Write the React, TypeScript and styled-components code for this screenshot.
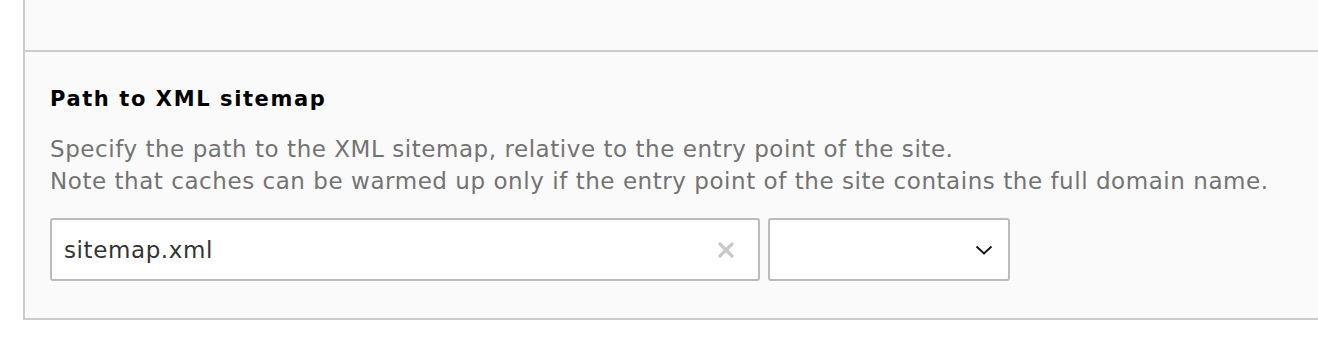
import React from "react";
import styled, { createGlobalStyle } from "styled-components";

const GlobalStyle = createGlobalStyle`
  html, body {
    margin: 0;
    padding: 0;
    background: #ffffff;
    font-family: "DejaVu Sans", Verdana, sans-serif;
  }
`;

const Page = styled.div`
  padding-left: 23px;
  height: 348px;
  box-sizing: border-box;
  overflow: hidden;
`;

const Panel = styled.div`
  background-color: #fafafa;
  border-left: 2px solid #cccccc;
  border-bottom: 2px solid #cccccc;
  margin-right: -10px;
`;

const PreviousSection = styled.div`
  height: 50px;
  border-bottom: 2px solid #cccccc;
`;

const FieldSection = styled.div`
  padding: 34px 0 37px 25px;
`;

const FieldLabel = styled.label`
  display: block;
  font-size: 21px;
  font-weight: bold;
  letter-spacing: 1.6px;
  color: #000000;
  line-height: 27px;
  margin-bottom: 20px;
`;

const FieldDescription = styled.div`
  font-size: 23px;
  letter-spacing: 0.55px;
  color: #737373;
  line-height: 32px;
  margin-bottom: 21px;
  white-space: nowrap;
`;

const Controls = styled.div`
  display: flex;
  gap: 8px;
`;

const InputBox = styled.div`
  width: 710px;
  height: 63px;
  box-sizing: border-box;
  border: 2px solid #bbbbbb;
  border-radius: 3px;
  background: #ffffff;
  display: flex;
  align-items: center;
`;

const TextInput = styled.input`
  flex: 1;
  min-width: 0;
  border: none;
  outline: none;
  background: transparent;
  font-family: "DejaVu Sans", Verdana, sans-serif;
  font-size: 23px;
  letter-spacing: 0.6px;
  color: #333333;
  padding: 0 0 0 12px;
  height: 100%;
`;

const ClearButton = styled.span`
  width: 16px;
  height: 16px;
  margin-right: 24px;
  display: flex;
  align-items: center;
  justify-content: center;
`;

const SelectBox = styled.div`
  width: 242px;
  height: 63px;
  box-sizing: border-box;
  border: 2px solid #bbbbbb;
  border-radius: 3px;
  background: #ffffff;
  display: flex;
  align-items: center;
  justify-content: flex-end;
  padding-right: 15px;
`;

function ClearIcon() {
  return (
    <svg width="16" height="16" viewBox="0 0 16 16">
      <path d="M2 2 L14 14 M14 2 L2 14" stroke="#c8c8c8" strokeWidth="3.2" strokeLinecap="round" />
    </svg>
  );
}

function ChevronIcon() {
  return (
    <svg width="18" height="10" viewBox="0 0 18 10">
      <path d="M1.5 1.5 L9 8.5 L16.5 1.5" stroke="#111111" strokeWidth="1.8" fill="none" />
    </svg>
  );
}

export default function App() {
  return (
    <>
      <GlobalStyle />
      <Page>
        <Panel>
          <PreviousSection />
          <FieldSection>
            <FieldLabel>Path to XML sitemap</FieldLabel>
            <FieldDescription>
              Specify the path to the XML sitemap, relative to the entry point of the site.
              <br />
              Note that caches can be warmed up only if the entry point of the site contains the full domain name.
            </FieldDescription>
            <Controls>
              <InputBox>
                <TextInput defaultValue="sitemap.xml" />
                <ClearButton>
                  <ClearIcon />
                </ClearButton>
              </InputBox>
              <SelectBox>
                <ChevronIcon />
              </SelectBox>
            </Controls>
          </FieldSection>
        </Panel>
      </Page>
    </>
  );
}
